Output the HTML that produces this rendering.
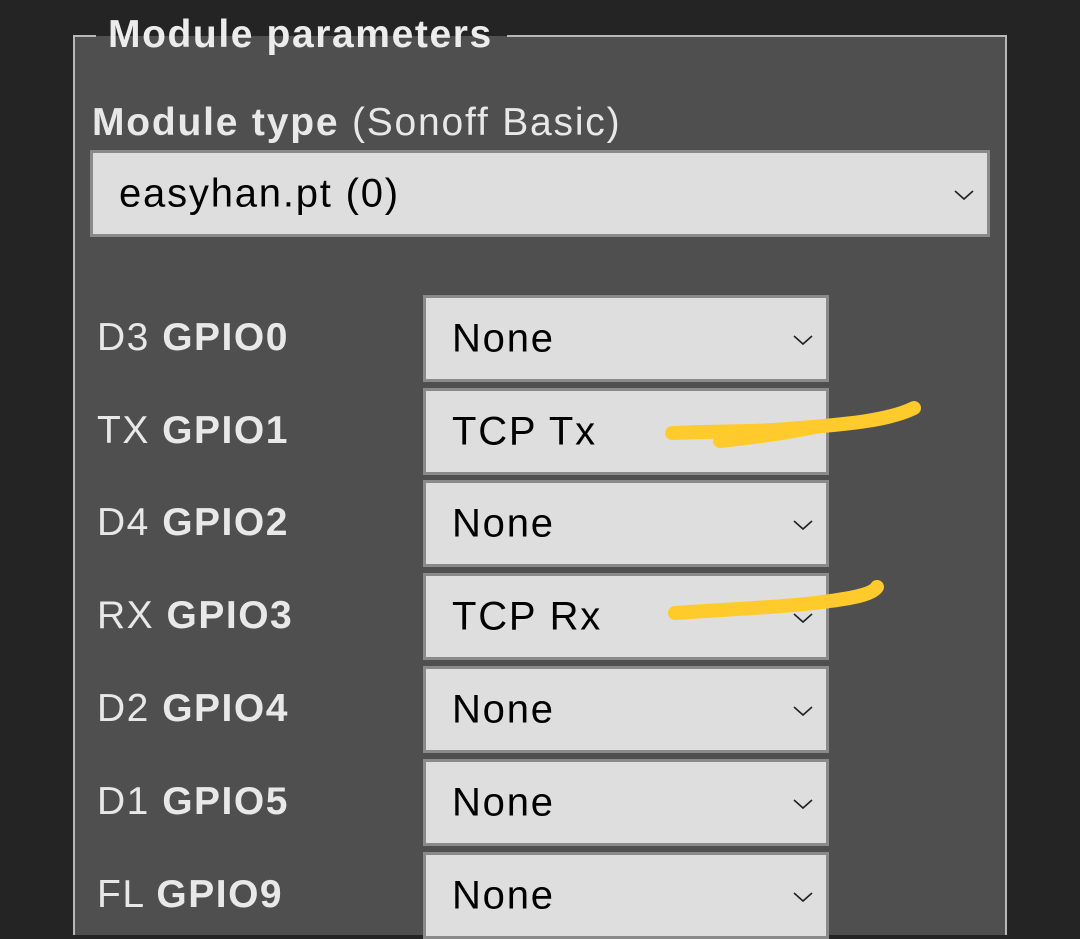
<!DOCTYPE html>
<html><head><style>
body{margin:0;width:1080px;height:925px;background:#242424;overflow:hidden;position:relative;font-family:"Liberation Sans",Roboto,sans-serif;}
.panel{position:absolute;left:73px;top:35px;width:934px;height:900px;background:#4f4f4f;border:2px solid #b8b8b8;border-bottom:none;box-sizing:border-box;}
.legend{position:absolute;left:96px;top:12px;padding:0 14px 0 12px;background:linear-gradient(#242424 0,#242424 24px,#4f4f4f 24px);color:#ececec;font-weight:bold;font-size:39px;line-height:46px;height:40px;letter-spacing:1.6px;}
.lbl{position:absolute;color:#e8e8e8;font-size:39px;line-height:46px;letter-spacing:1.5px;}
.lbl b{font-weight:bold;}
.sel{position:absolute;background:#dedede;border:3px solid #8a8a8a;box-sizing:border-box;color:#000;font-size:40px;letter-spacing:1.8px;}
.sel span{position:absolute;left:26px;top:50%;transform:translateY(-50%);}
.chev{position:absolute;right:12px;top:50%;margin-top:-5px;}
</style></head><body>
<div class="panel"></div>
<div class="legend">Module parameters</div>
<div class="lbl" style="left:92px;top:100px;letter-spacing:1.8px;"><b>Module type</b> (Sonoff Basic)</div>
<div class="sel" style="left:90px;top:150px;width:900px;height:87px;"><span>easyhan.pt (0)</span>
<svg class="chev" width="22" height="12"><path d="M2 2 L11 10 L20 2" fill="none" stroke="#222" stroke-width="1.6"/></svg></div>

<div class="lbl" style="left:97px;top:315px;">D3 <b>GPIO0</b></div>
<div class="lbl" style="left:97px;top:408px;">TX <b>GPIO1</b></div>
<div class="lbl" style="left:97px;top:500px;">D4 <b>GPIO2</b></div>
<div class="lbl" style="left:97px;top:593px;">RX <b>GPIO3</b></div>
<div class="lbl" style="left:97px;top:686px;">D2 <b>GPIO4</b></div>
<div class="lbl" style="left:97px;top:779px;">D1 <b>GPIO5</b></div>
<div class="lbl" style="left:97px;top:872px;">FL <b>GPIO9</b></div>

<div class="sel" style="left:423px;top:295px;width:406px;height:87px;"><span>None</span><svg class="chev" width="22" height="12"><path d="M2 2 L11 10 L20 2" fill="none" stroke="#222" stroke-width="1.6"/></svg></div>
<div class="sel" style="left:423px;top:388px;width:406px;height:87px;"><span>TCP Tx</span></div>
<div class="sel" style="left:423px;top:480px;width:406px;height:87px;"><span>None</span><svg class="chev" width="22" height="12"><path d="M2 2 L11 10 L20 2" fill="none" stroke="#222" stroke-width="1.6"/></svg></div>
<div class="sel" style="left:423px;top:573px;width:406px;height:87px;"><span>TCP Rx</span><svg class="chev" width="22" height="12"><path d="M2 2 L11 10 L20 2" fill="none" stroke="#222" stroke-width="1.6"/></svg></div>
<div class="sel" style="left:423px;top:666px;width:406px;height:87px;"><span>None</span><svg class="chev" width="22" height="12"><path d="M2 2 L11 10 L20 2" fill="none" stroke="#222" stroke-width="1.6"/></svg></div>
<div class="sel" style="left:423px;top:759px;width:406px;height:87px;"><span>None</span><svg class="chev" width="22" height="12"><path d="M2 2 L11 10 L20 2" fill="none" stroke="#222" stroke-width="1.6"/></svg></div>
<div class="sel" style="left:423px;top:852px;width:406px;height:87px;"><span>None</span><svg class="chev" width="22" height="12"><path d="M2 2 L11 10 L20 2" fill="none" stroke="#222" stroke-width="1.6"/></svg></div>

<svg style="position:absolute;left:0;top:0" width="1080" height="925">
<g fill="none" stroke="#ffca2c" stroke-linecap="round" stroke-width="14">
<path d="M672 433 C720 431 760 432 800 428 C850 424 890 420 914 408"/>
<path d="M720 441 C760 437 790 432 815 427"/>
<path d="M675 613 C730 609 790 607 830 601 C860 597 873 593 877 587"/>
</g></svg>
</body></html>
